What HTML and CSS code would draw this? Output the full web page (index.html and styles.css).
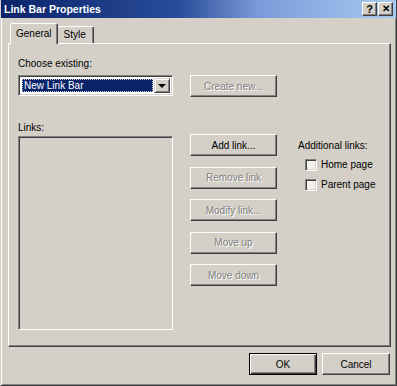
FILE: index.html
```html
<!DOCTYPE html>
<html lang="en">
<head>
    <meta charset="UTF-8">
    <title>Link Bar Properties</title>
    <link rel="stylesheet" href="styles.css">
</head>
<body>
    <div class="window">
        <div class="titlebar">
            <span class="title">Link Bar Properties</span>
            <div class="caption-btns">
                <span class="cbtn">?</span>
                <span class="cbtn close">&#x2715;</span>
            </div>
        </div>

        <div class="client">
            <div class="tabs">
                <div class="tab active">General</div>
                <div class="tab">Style</div>
            </div>

            <div class="panel">
                <div class="label">Choose existing:</div>
                <div class="choose-row">
                    <div class="select">
                        <span class="sel-text">New Link Bar</span>
                        <span class="drop-btn"><span class="arrow"></span></span>
                    </div>
                    <button class="btn" disabled>Create new...</button>
                </div>

                <div class="label links-label">Links:</div>
                <div class="links-row">
                    <div class="listbox"></div>
                    <div class="btn-col">
                        <button class="btn">Add link...</button>
                        <button class="btn" disabled>Remove link</button>
                        <button class="btn" disabled>Modify link...</button>
                        <button class="btn" disabled>Move up</button>
                        <button class="btn" disabled>Move down</button>
                    </div>
                    <div class="extra">
                        <div class="extra-title">Additional links:</div>
                        <label class="check"><span class="box"></span>Home page</label>
                        <label class="check"><span class="box"></span>Parent page</label>
                    </div>
                </div>
            </div>

            <div class="footer">
                <button class="btn default">OK</button>
                <button class="btn">Cancel</button>
            </div>
        </div>
    </div>
</body>
</html>
```

FILE: styles.css
```css
* {
    margin: 0;
    padding: 0;
    box-sizing: border-box;
}

body {
    font-family: "Liberation Sans", Arial, sans-serif;
    font-size: 10px;
    color: #000;
    background: #d4d0c8;
}

.window {
    width: 397px;
    height: 386px;
    background: #d4d0c8;
    border-left: 1px solid #d4d0c8;
    border-right: 1px solid #404040;
    border-bottom: 1px solid #404040;
    box-shadow: inset 1px 0 #fff, inset -1px -1px #808080;
}

/* title bar */
.titlebar {
    height: 18px;
    display: flex;
    align-items: center;
    justify-content: space-between;
    padding: 0 3px 0 3px;
    background: linear-gradient(to right, #0a246a 0%, #2a4c9a 45%, #7a9ad8 65%, #a6caf0 100%);
}

.title {
    color: #fff;
    font-weight: bold;
    font-size: 10.5px;
}

.caption-btns {
    display: flex;
    gap: 1px;
}

.cbtn {
    width: 15px;
    height: 14px;
    display: flex;
    align-items: center;
    justify-content: center;
    background: #d4d0c8;
    border: 1px solid;
    border-color: #fff #404040 #404040 #fff;
    box-shadow: inset -1px -1px #808080;
    font-weight: bold;
    font-size: 11px;
    line-height: 1;
}

.cbtn.close {
    font-size: 10px;
}

/* client */
.client {
    padding: 0 5px 0 7px;
}

.tabs {
    display: flex;
    align-items: flex-end;
    height: 25px;
    padding-left: 2px;
}

.tab {
    height: 17px;
    padding: 2px 6px 0 6px;
    border: 1px solid;
    border-bottom: none;
    border-color: #fff #404040 transparent #fff;
    box-shadow: inset -1px 0 #808080;
    border-radius: 2px 2px 0 0;
}

.tab.active {
    padding: 4px 5px 0 5px;
    position: relative;
    z-index: 1;
    background: #d4d0c8;
    margin-bottom: -1px;
    height: 21px;
}

.tab:not(.active) {
    margin-left: -1px;
    padding: 2px 7px 0 6px;
}

.panel {
    width: 383px;
    height: 304px;
    padding: 13px 9px 0 9px;
    border: 1px solid;
    border-color: #fff #404040 #404040 #fff;
    box-shadow: inset -1px -1px #808080;
}

.label {
    height: 13px;
    line-height: 13px;
}

.choose-row {
    display: flex;
    gap: 17px;
    margin-top: 5px;
}

.select {
    width: 155px;
    height: 21px;
    display: flex;
    align-items: stretch;
    padding: 2px;
    background: #fff;
    border: 1px solid;
    border-color: #808080 #fff #fff #808080;
    box-shadow: inset 1px 1px #404040, inset -1px -1px #d4d0c8;
}

.sel-text {
    flex: 1;
    margin: 1px;
    padding-left: 2px;
    background: #0a246a;
    color: #fff;
    line-height: 13px;
    outline: 1px dotted #ccc;
    outline-offset: -1px;
}

.drop-btn {
    width: 16px;
    display: flex;
    align-items: center;
    justify-content: center;
    background: #d4d0c8;
    border: 1px solid;
    border-color: #d4d0c8 #404040 #404040 #d4d0c8;
    box-shadow: inset 1px 1px #fff, inset -1px -1px #808080;
}

.arrow {
    width: 0;
    height: 0;
    border-left: 4px solid transparent;
    border-right: 4px solid transparent;
    border-top: 4px solid #000;
}

.btn {
    width: 87px;
    height: 22px;
    font-family: inherit;
    font-size: 10px;
    color: #000;
    background: #d4d0c8;
    border: 1px solid;
    border-color: #fff #404040 #404040 #fff;
    box-shadow: inset -1px -1px #808080;
}

.btn:disabled {
    color: #808080;
    text-shadow: 1px 1px #fff;
}

.links-label {
    margin-top: 24px;
}

.links-row {
    display: flex;
}

.listbox {
    width: 155px;
    height: 194px;
    margin-top: 2px;
    border: 1px solid;
    border-color: #808080 #fff #fff #808080;
    box-shadow: inset 1px 1px #404040, inset -1px -1px #d4d0c8;
}

.btn-col {
    display: flex;
    flex-direction: column;
    gap: 10.5px;
    margin-left: 17px;
}

.extra {
    margin-left: 21px;
    padding-top: 5px;
    white-space: nowrap;
}

.extra-title {
    line-height: 13px;
}

.check {
    display: flex;
    align-items: center;
    gap: 4px;
    height: 13px;
    margin-top: 6px;
    margin-left: 7px;
}

.check + .check {
    margin-top: 7px;
}

.box {
    width: 12px;
    height: 12px;
    background: #f4f2ee;
    border: 1px solid;
    border-color: #808080 #fff #fff #808080;
    box-shadow: inset 1px 1px #404040, inset -1px -1px #d4d0c8;
}

.footer {
    display: flex;
    justify-content: flex-end;
    gap: 5px;
    padding: 6px 1px 0 0;
}

.footer .btn {
    width: 68px;
}

.btn.default {
    border: 1px solid #000;
    box-shadow: inset 1px 1px #fff, inset -1px -1px #404040, inset -2px -2px #808080;
}
```
